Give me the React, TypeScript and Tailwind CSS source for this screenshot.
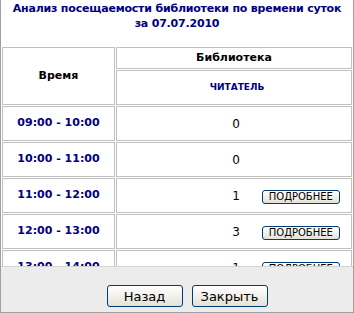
const rows = [
  { time: '09:00 - 10:00', count: 0 },
  { time: '10:00 - 11:00', count: 0 },
  { time: '11:00 - 12:00', count: 1 },
  { time: '12:00 - 13:00', count: 3 },
  { time: '13:00 - 14:00', count: 1 },
];

function SmallButton() {
  return (
    <button className='h-[14px] w-[78px] rounded-[3px] border border-[#003c74] bg-linear-to-b from-white to-[#e4e1d6] text-[10px] leading-none text-black'>
      ПОДРОБНЕЕ
    </button>
  );
}

function DlgButton({ label }: { label: string }) {
  return (
    <button className='h-[22px] w-[76px] rounded-[3px] border border-[#003c74] bg-linear-to-b from-white to-[#e4e1d6] text-[13px] leading-none text-black'>
      {label}
    </button>
  );
}

export default function App() {
  return (
    <div className='flex h-[313px] w-[354px] flex-col border border-t-0 border-[#a0a0a0] bg-white font-["DejaVu_Sans",sans-serif]'>
      <div className='flex-1 overflow-hidden'>
        <div className='pt-[1px] text-center text-[11px] leading-[15px] font-bold tracking-[-0.2px] text-[#000080]'>
          Анализ посещаемости библиотеки по времени суток
          <br />
          за 07.07.2010
        </div>
        <table className='mt-[15px] w-full border-separate border-spacing-[1px]'>
          <thead>
            <tr>
              <th
                rowSpan={2}
                className='w-[113px] border border-[#c0c0c0] text-[11px] font-bold text-black'
              >
                Время
              </th>
              <th className='h-[22px] border border-[#c0c0c0] text-[11px] font-bold text-black'>
                Библиотека
              </th>
            </tr>
            <tr>
              <th className='h-[35px] border border-[#c0c0c0] pl-[6px] text-[9px] font-bold text-[#000080]'>
                ЧИТАТЕЛЬ
              </th>
            </tr>
          </thead>
          <tbody>
            {rows.map((r) => (
              <tr key={r.time}>
                <td className='h-[35px] border border-[#c0c0c0] text-center text-[11px] font-bold text-[#000080]'>
                  {r.time}
                </td>
                <td className='border border-[#c0c0c0] text-[12px] text-black'>
                  <div className='grid grid-cols-[1fr_auto_1fr] items-center'>
                    <span />
                    <span className='pl-[4px]'>{r.count}</span>
                    <div className='pl-[22px]'>{r.count > 0 && <SmallButton />}</div>
                  </div>
                </td>
              </tr>
            ))}
          </tbody>
        </table>
      </div>
      <div className='flex h-[46px] justify-center gap-[9px] border-t border-[#d4d4d4] bg-[#ececec] pt-[18px] pl-[20px]'>
        <DlgButton label='Назад' />
        <DlgButton label='Закрыть' />
      </div>
    </div>
  );
}
